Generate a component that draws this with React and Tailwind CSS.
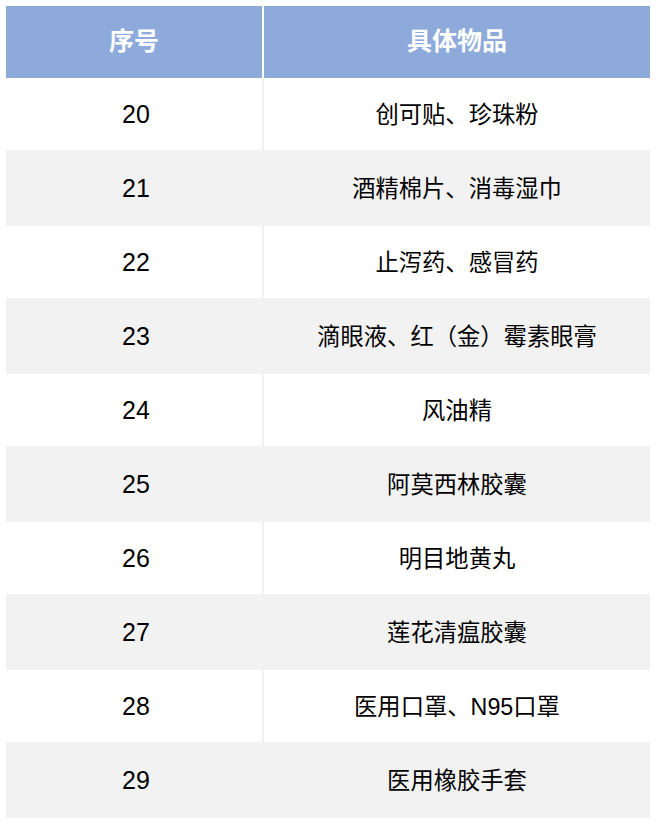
const rows = [
  ["20", "创可贴、珍珠粉"],
  ["21", "酒精棉片、消毒湿巾"],
  ["22", "止泻药、感冒药"],
  ["23", "滴眼液、红（金）霉素眼膏"],
  ["24", "风油精"],
  ["25", "阿莫西林胶囊"],
  ["26", "明目地黄丸"],
  ["27", "莲花清瘟胶囊"],
  ["28", "医用口罩、N95口罩"],
  ["29", "医用橡胶手套"],
];

export default function App() {
  return (
    <div
      className="w-[656px] min-h-[826px] bg-white p-[6px] text-black"
      style={{ fontFamily: '"Liberation Sans", "Noto Sans CJK SC", sans-serif' }}
    >
      {/* header */}
      <div className="flex gap-[2px] bg-white">
        <div className="w-[256px] h-[72px] flex items-center justify-center bg-[#8eaadb] text-white font-bold text-[25px]">
          序号
        </div>
        <div className="w-[386px] h-[72px] flex items-center justify-center bg-[#8eaadb] text-white font-bold text-[25px]">
          具体物品
        </div>
      </div>

      {rows.map(([no, item], i) => {
        const odd = i % 2 === 1;
        return (
          <div
            key={no}
            className={
              odd
                ? "flex gap-[2px] bg-[#f2f2f2] h-[76px]"
                : "flex gap-[2px] bg-[#f2f2f2] h-[72px]"
            }
          >
            <div
              className={
                odd
                  ? "w-[256px] flex items-center justify-center text-[25px] bg-[#f2f2f2] pl-[4px] pt-[2px]"
                  : "w-[256px] flex items-center justify-center text-[25px] bg-white pl-[4px] pt-[2px]"
              }
            >
              {no}
            </div>
            <div
              className={
                odd
                  ? "w-[386px] flex items-center justify-center text-[23.3px] bg-[#f2f2f2] pt-[2px]"
                  : "w-[386px] flex items-center justify-center text-[23.3px] bg-white pt-[2px]"
              }
            >
              {item}
            </div>
          </div>
        );
      })}
    </div>
  );
}
